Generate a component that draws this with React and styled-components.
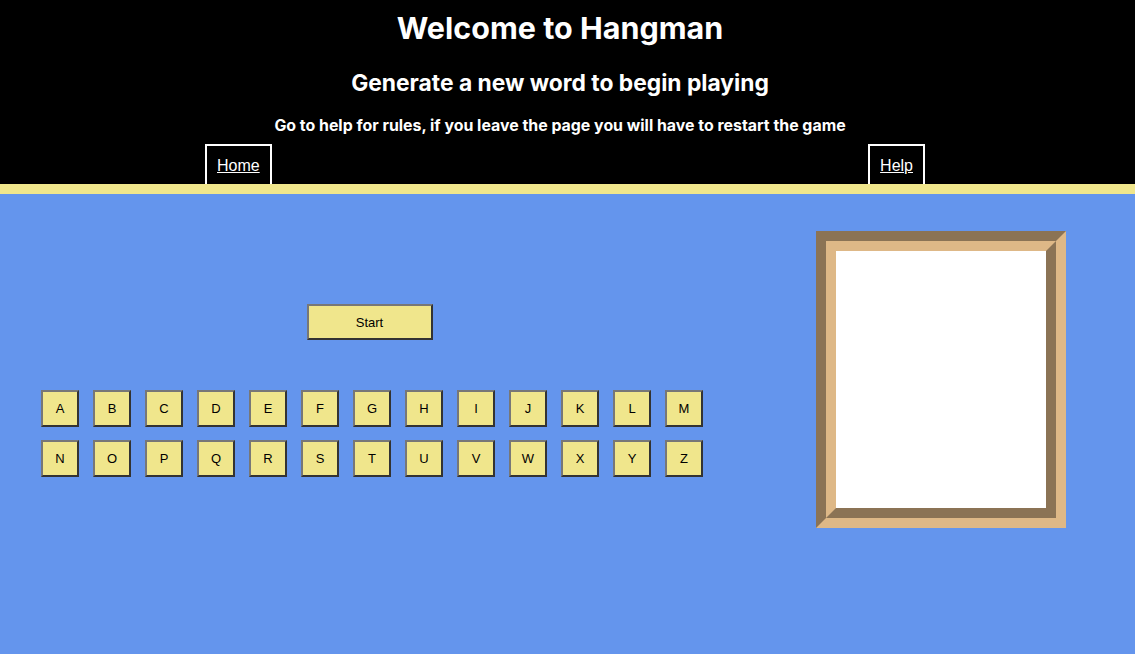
import styled, { createGlobalStyle } from "styled-components";

const GlobalStyle = createGlobalStyle`
  html, body {
    margin: 0;
    padding: 0;
    background: #6495ed;
    font-family: Inter, "Liberation Sans", sans-serif;
  }
`;

const LETTERS = "ABCDEFGHIJKLMNOPQRSTUVWXYZ".split("");

const App = () => {
  return (
    <>
      <GlobalStyle />
      <Header>
        <Title>Welcome to Hangman</Title>
        <Subtitle>Generate a new word to begin playing</Subtitle>
        <Note>Go to help for rules, if you leave the page you will have to restart the game</Note>
        <Nav>
          <NavLink href="#">Home</NavLink>
          <NavLink href="#">Help</NavLink>
        </Nav>
      </Header>
      <Main>
        <GameColumn>
          <StartButton>Start</StartButton>
          <Keyboard>
            {LETTERS.map((l) => (
              <LetterButton key={l}>{l}</LetterButton>
            ))}
          </Keyboard>
        </GameColumn>
        <Frame>
          <InnerFrame>
            <Canvas />
          </InnerFrame>
        </Frame>
      </Main>
    </>
  );
};

export default App;

const Header = styled.header`
  background: #000;
  color: #fff;
  text-align: center;
  padding-top: 8px;
  border-bottom: 10px solid #f0e68c;
`;

const Title = styled.h1`
  margin: 0;
  padding-right: 15px;
  font-size: 30.5px;
  line-height: 40px;
  font-weight: 700;
`;

const Subtitle = styled.h2`
  margin: 20px 0 0;
  padding-right: 15px;
  font-size: 22.8px;
  line-height: 30px;
  font-weight: 700;
`;

const Note = styled.h3`
  margin: 18px 0 0;
  padding-right: 15px;
  font-size: 15.9px;
  line-height: 20px;
  font-weight: 700;
`;

const Nav = styled.nav`
  display: flex;
  justify-content: space-between;
  margin-top: 8px;
  padding: 0 210px 0 205px;
`;

const NavLink = styled.a`
  display: block;
  border: 2px solid #fff;
  border-bottom: none;
  padding: 11px 10px 9px;
  color: #fff;
  font-family: "Liberation Sans", Arial, sans-serif;
  font-size: 16px;
  line-height: 18px;
  text-decoration: underline;
`;

const Main = styled.main`
  display: flex;
  align-items: flex-start;
  padding: 37px 69px 0 41px;
  min-height: 460px;
  box-sizing: border-box;
`;

const GameColumn = styled.div`
  width: 662px;
  display: flex;
  flex-direction: column;
  align-items: center;
  padding-top: 73px;
`;

const StartButton = styled.button`
  box-sizing: border-box;
  width: 126px;
  height: 36px;
  margin-right: 5px;
  background: #f0e68c;
  border: 2px solid;
  border-color: #777 #333 #333 #777;
  font-family: "Liberation Sans", Arial, sans-serif;
  font-size: 13px;
  color: #000;
  padding: 0;
`;

const Keyboard = styled.div`
  margin-top: 50px;
  display: grid;
  grid-template-columns: repeat(13, 38px);
  column-gap: 14px;
  row-gap: 13px;
`;

const LetterButton = styled.button`
  box-sizing: border-box;
  width: 38px;
  height: 37px;
  background: #f0e68c;
  border: 2px solid;
  border-color: #777 #333 #333 #777;
  font-family: "Liberation Sans", Arial, sans-serif;
  font-size: 13px;
  color: #000;
  padding: 0;
`;

const Frame = styled.div`
  margin-left: auto;
  border: 10px solid;
  border-color: #8b7355 #deb887 #deb887 #8b7355;
`;

const InnerFrame = styled.div`
  border: 10px solid;
  border-color: #deb887 #8b7355 #8b7355 #deb887;
`;

const Canvas = styled.div`
  width: 210px;
  height: 257px;
  background: #fff;
`;
